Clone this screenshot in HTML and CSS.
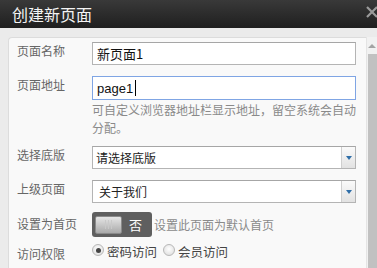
FILE: index.html
```html
<!DOCTYPE html>
<html lang="zh-CN">
<head>
<meta charset="utf-8">
<title>创建新页面</title>
<link rel="stylesheet" href="styles.css">
</head>
<body>
<div class="dialog">
  <div class="titlebar">
    <span class="title">创建新页面</span>
    <svg class="close" width="12" height="12" viewBox="0 0 12 12"><path d="M1 1L11 11M11 1L1 11" stroke="#9a9a9a" stroke-width="2.2"/></svg>
  </div>
  <div class="body">
    <div class="panel">
      <div class="row">
        <div class="label">页面名称</div>
        <div class="field"><div class="input">新页面1</div></div>
      </div>
      <div class="row row-url">
        <div class="label">页面地址</div>
        <div class="field">
          <div class="input focus">page1<span class="caret"></span></div>
          <div class="help">可自定义浏览器地址栏显示地址，留空系统会自动分配。</div>
        </div>
      </div>
      <div class="row">
        <div class="label">选择底版</div>
        <div class="field"><div class="select"><span class="sel-text">请选择底版</span><span class="arrow"><i></i></span></div></div>
      </div>
      <div class="row">
        <div class="label">上级页面</div>
        <div class="field"><div class="select"><span class="sel-text indent">关于我们</span><span class="arrow"><i></i></span></div></div>
      </div>
      <div class="row row-toggle">
        <div class="label">设置为首页</div>
        <div class="field inline">
          <div class="toggle"><span class="knob"><b></b><b></b><b></b></span><span class="toggle-text">否</span></div>
          <span class="hint">设置此页面为默认首页</span>
        </div>
      </div>
      <div class="row row-radio">
        <div class="label">访问权限</div>
        <div class="field inline">
          <span class="radio checked"></span><span class="radio-label">密码访问</span>
          <span class="radio"></span><span class="radio-label">会员访问</span>
        </div>
      </div>
    </div>
    <div class="scrollbar">
      <div class="sb-up"></div>
      <div class="sb-thumb"></div>
    </div>
  </div>
</div>
</body>
</html>
```

FILE: styles.css
```css
* { box-sizing: border-box; }
html, body {
  margin: 0;
  padding: 0;
  width: 377px;
  height: 268px;
  overflow: hidden;
  background: #ebebeb;
  font-family: "Noto Sans CJK SC", "Liberation Sans", sans-serif;
  font-size: 12px;
}
.dialog { width: 377px; height: 268px; display: flex; flex-direction: column; }
.titlebar {
  height: 28px;
  flex: none;
  background: linear-gradient(#393939, #1f1f1f);
  display: flex;
  align-items: center;
  justify-content: space-between;
  padding-left: 12px;
}
.title {
  color: #f4f4f4;
  font-size: 16px;
  line-height: 20px;
}
.close { margin-right: -1px; margin-top: -4px; }
.body {
  flex: 1;
  display: flex;
  padding: 9px 0 0 8px;
  min-height: 0;
}
.panel {
  flex: 1;
  background: #f9f9f9;
  border: 1px solid #dcdcdc;
  border-right: none;
  border-bottom: none;
  border-top-left-radius: 4px;
  padding: 4px 10px 0 8px;
  overflow: hidden;
}
.scrollbar {
  width: 11px;
  flex: none;
  background: #f1f1f1;
  border-left: 1px solid #e4e4e4;
  display: flex;
  flex-direction: column;
  align-items: stretch;
}
.sb-up { height: 17px; }
.sb-up::after {
  content: "";
  display: block;
  margin: 7px auto 0;
  width: 0; height: 0;
  border-left: 4px solid transparent;
  border-right: 4px solid transparent;
  border-bottom: 4px solid #a3a3a3;
}
.sb-thumb { flex: 1; background: #c1c1c1; margin-left: 1px; }
.row { display: flex; margin-bottom: 11px; }
.row-url { margin-bottom: 9px; }
.label {
  width: 75px;
  flex: none;
  color: #666;
  font-size: 12px;
  line-height: 18px;
}
.field { flex: 1; }
.field.inline { display: flex; align-items: center; }
.input {
  height: 23px;
  border: 1px solid #b4b4b4;
  border-top-color: #a6a6a6;
  background: #fff;
  font-size: 13px;
  line-height: 21px;
  padding-left: 4px;
  color: #111;
  display: flex;
  align-items: center;
}
.input.focus {
  height: 24px;
  border-color: #7fa5e4;
  font-family: "Liberation Sans", sans-serif;
  font-size: 13px;
}
.caret { display: inline-block; width: 1px; height: 16px; background: #000; margin-left: 2px; }
.help {
  color: #8a8a8a;
  font-size: 12px;
  line-height: 18px;
  padding-top: 1px;
}
.select {
  height: 23px;
  border: 1px solid #b4b4b4;
  border-top-color: #a6a6a6;
  background: #fff;
  display: flex;
  align-items: center;
  font-size: 12px;
  color: #222;
}
.sel-text { flex: 1; padding-left: 3px; }
.sel-text.indent { padding-left: 6px; }
.arrow {
  width: 14px;
  height: 100%;
  border-left: 1px solid #cfcfcf;
  background: linear-gradient(#fafafa, #e2e2e2);
  display: flex;
  align-items: center;
  justify-content: center;
}
.arrow i {
  display: block;
  width: 0; height: 0;
  border-left: 3.5px solid transparent;
  border-right: 3.5px solid transparent;
  border-top: 4px solid #2f6ea8;
  margin-top: 1px;
}
.row-toggle { margin-top: -2px; margin-bottom: 6px; }
.row-toggle .label { padding-top: 3px; }
.toggle {
  width: 60px;
  height: 25px;
  background: #5f5f5f;
  border-radius: 3px;
  display: flex;
  align-items: center;
  padding-left: 3px;
  flex: none;
}
.knob {
  width: 27px;
  height: 18px;
  border-radius: 2px;
  background: linear-gradient(#e6e6e6, #a9a9a9);
  border: 1px solid #8a8a8a;
  display: flex;
  justify-content: center;
  align-items: center;
  gap: 2px;
}
.knob b { display: block; width: 1px; height: 9px; background: #c9c9c9; }
.toggle-text { color: #fff; font-size: 13px; margin-left: 7px; }
.hint { color: #8a8a8a; margin-left: 2px; }
.row-radio .label { line-height: 20px; padding-top: 1px; }
.row-radio .field.inline { align-items: flex-start; }
.radio {
  width: 12px; height: 12px;
  border-radius: 50%;
  border: 1px solid #b8b8b8;
  background: radial-gradient(circle at 50% 40%, #fff, #d9d9d9);
  flex: none;
  display: flex;
  align-items: center;
  justify-content: center;
  margin-top: 1px;
}
.radio.checked::after {
  content: "";
  width: 5px; height: 5px; border-radius: 50%;
  background: #444;
}
.radio-label { color: #444; font-size: 12.5px; line-height: 18px; margin: 0 6px 0 3px; }
```
